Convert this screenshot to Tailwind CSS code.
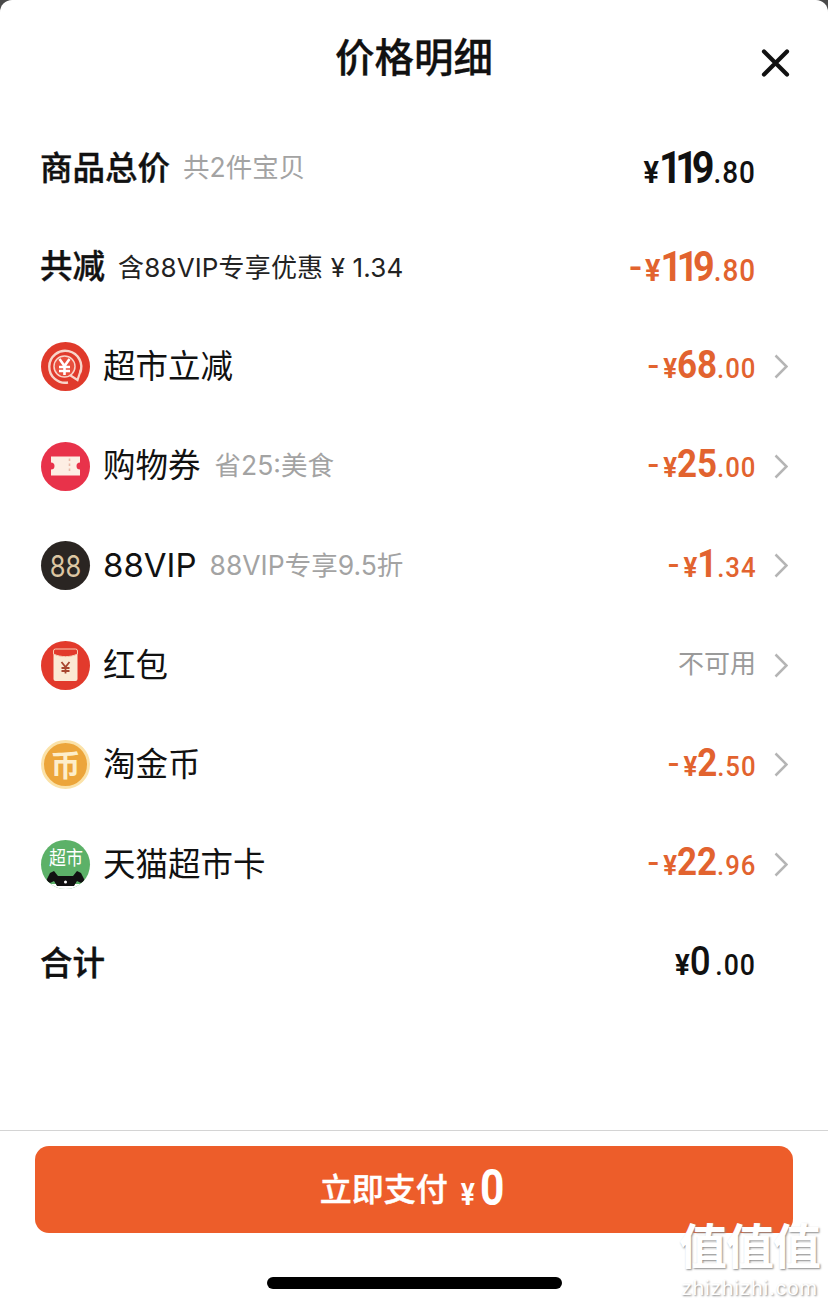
<!DOCTYPE html>
<html lang="zh">
  <head>
    <meta charset="UTF-8" />
    <title>价格明细</title>
    <script src="https://cdn.jsdelivr.net/npm/@tailwindcss/browser@4"></script>
  </head>
  <body class="bg-[#4a4a4a] font-['Inter','Noto_Sans_CJK_SC',sans-serif]">
    <div class="relative w-[828px] h-[1305px] overflow-hidden bg-white rounded-t-[12px] flex flex-col text-[#111]">
      <header class="relative h-[118px] flex items-center justify-center shrink-0">
        <h1 class="text-[39.500px] leading-none font-medium [-webkit-text-stroke:0.3px_#111]">价格明细</h1>
        <svg class="absolute left-[761px] top-[49px]" width="29" height="28" viewBox="0 0 29 28" fill="none" stroke="#111" stroke-width="4.200" stroke-linecap="round"><path d="M3 2.500 26 25.500M26 2.500 3 25.500"/></svg>
      </header>

      <ul class="flex flex-col pl-[41px] pr-[40px] shrink-0">
        <li class="h-[99.500px] flex items-center">
          <span class="-ml-[1px] mt-[3px] text-[32.500px] font-medium [-webkit-text-stroke:0.4px_#111]">商品总价</span>
          <span class="ml-[13px] mt-[1px] text-[26.500px] text-[#a3a3a3]">共2件宝贝</span>
          <span class="ml-auto mr-[32px] mt-[1px] inline-block origin-right scale-x-[.9] font-['Roboto',sans-serif] font-bold whitespace-nowrap"><span class="text-[32px]">¥</span><span class="text-[44px] tracking-[-7px]">119</span><span class="ml-[6px] text-[31px] font-medium tracking-[1px]">.80</span></span>
        </li>
        <li class="h-[99.500px] flex items-center">
          <span class="-ml-[1px] mt-[1px] text-[32.500px] font-medium [-webkit-text-stroke:0.4px_#111]">共减</span>
          <span class="ml-[13px] text-[26px] tracking-[.15px] text-[#222]">含88VIP专享优惠 ¥ 1.34</span>
          <span class="ml-auto mr-[32px] mb-[1px] inline-block origin-right scale-x-[.9] font-['Roboto',sans-serif] font-bold whitespace-nowrap text-[#e2632f]"><span class="inline-block scale-x-[1.250] -translate-y-[3px] mr-[4px] text-[32px]">-</span><span class="text-[32px]">¥</span><span class="text-[42px] tracking-[-6px]">119</span><span class="ml-[5px] text-[31px] font-medium tracking-[1px]">.80</span></span>
        </li>

        <li class="h-[99.500px] flex items-center">
          <svg class="w-[49px] h-[49px] mr-[13px] shrink-0" viewBox="0 0 49 49">
            <circle cx="24.500" cy="24.500" r="24.500" fill="#e03a2b"/>
            <path d="M27 40.500A16 16 0 1 1 39 31" stroke="#f8d5ca" stroke-width="2.400" fill="none"/>
            <path d="M40 27.500 36.500 38 29.500 33.500" stroke="#f8d5ca" stroke-width="2.200" fill="none"/>
            <circle cx="23.500" cy="24.500" r="10.500" fill="#e8503e" stroke="#f8d5ca" stroke-width="1.500"/>
            <path d="M18.500 17l5 7 5-7M23.500 24v9M18 25h11M18 29h11" stroke="#fff" stroke-width="2.600" fill="none"/>
          </svg>
          <span class="mt-[2px] text-[32.500px]">超市立减</span>
          <span class="ml-auto mb-[3px] inline-block origin-right scale-x-[.92] font-['Roboto',sans-serif] font-bold whitespace-nowrap text-[#e2632f]"><span class="inline-block scale-x-[1.250] -translate-y-[3px] mr-[5px] text-[28px]">-</span><span class="text-[28px]">¥</span><span class="text-[38px]">68</span><span class="text-[28px] font-medium tracking-[1px]">.00</span></span>
          <svg class="ml-[18px] shrink-0" width="14" height="25" viewBox="0 0 14 25" fill="none" stroke="#b5b5b5" stroke-width="2.500"><path d="M1.500 1.500l11 11-11 11"/></svg>
        </li>
        <li class="h-[99.500px] flex items-center">
          <svg class="w-[49px] h-[49px] mr-[13px] shrink-0" viewBox="0 0 49 49">
            <circle cx="24.500" cy="24.500" r="24.500" fill="#e8324a"/>
            <path d="M10 14.500h29v6a3.500 3.500 0 0 0 0 7v6H10v-6a3.500 3.500 0 0 0 0-7z" fill="#fdeee4"/>
            <path d="M28.500 16.500v15" stroke="#e8b9a8" stroke-width="1.600" stroke-dasharray="2.500 2.500"/>
          </svg>
          <span class="mt-[1px] text-[32.500px]">购物券</span>
          <span class="ml-[14px] text-[26.500px] text-[#a3a3a3]">省25:美食</span>
          <span class="ml-auto mb-[3px] inline-block origin-right scale-x-[.92] font-['Roboto',sans-serif] font-bold whitespace-nowrap text-[#e2632f]"><span class="inline-block scale-x-[1.250] -translate-y-[3px] mr-[5px] text-[28px]">-</span><span class="text-[28px]">¥</span><span class="text-[38px]">25</span><span class="text-[28px] font-medium tracking-[1px]">.00</span></span>
          <svg class="ml-[18px] shrink-0" width="14" height="25" viewBox="0 0 14 25" fill="none" stroke="#b5b5b5" stroke-width="2.500"><path d="M1.500 1.500l11 11-11 11"/></svg>
        </li>
        <li class="h-[99.500px] flex items-center">
          <span class="w-[49px] h-[49px] mr-[13px] shrink-0 rounded-full bg-[#2a2522] flex items-center justify-center text-[#dcc6a2] text-[30px] leading-none"><span class="inline-block scale-x-[.85]">88</span></span>
          <span class="text-[33px]">88VIP</span>
          <span class="ml-[13px] text-[26.500px] text-[#a3a3a3]">88VIP专享9.5折</span>
          <span class="ml-auto mb-[3px] inline-block origin-right scale-x-[.92] font-['Roboto',sans-serif] font-bold whitespace-nowrap text-[#e2632f]"><span class="inline-block scale-x-[1.250] -translate-y-[3px] mr-[5px] text-[28px]">-</span><span class="text-[28px]">¥</span><span class="text-[38px] tracking-[-3px]">1</span><span class="ml-[3px] text-[28px] font-medium tracking-[1px]">.34</span></span>
          <svg class="ml-[18px] shrink-0" width="14" height="25" viewBox="0 0 14 25" fill="none" stroke="#b5b5b5" stroke-width="2.500"><path d="M1.500 1.500l11 11-11 11"/></svg>
        </li>
        <li class="h-[99.500px] flex items-center">
          <svg class="w-[49px] h-[49px] mr-[13px] shrink-0" viewBox="0 0 49 49">
            <circle cx="24.500" cy="24.500" r="24.500" fill="#e23a2c"/>
            <rect x="12.500" y="8" width="24" height="32" rx="2" fill="#fbe9d3"/>
            <path d="M12.500 10a2 2 0 0 1 2-2h20a2 2 0 0 1 2 2v3c-7 3.500-17 3.500-24 0z" fill="#e23a2c" stroke="#f7cdb4" stroke-width="1"/>
            <path d="M20.500 21l4 5 4-5M24.500 26v6.500M20.500 27h8M20.500 30h8" stroke="#a8452f" stroke-width="1.800" fill="none"/>
          </svg>
          <span class="mt-[2px] text-[32.500px]">红包</span>
          <span class="ml-auto mb-[3px] text-[26px] text-[#9a9a9a]">不可用</span>
          <svg class="ml-[18px] shrink-0" width="14" height="25" viewBox="0 0 14 25" fill="none" stroke="#b5b5b5" stroke-width="2.500"><path d="M1.500 1.500l11 11-11 11"/></svg>
        </li>
        <li class="h-[99.500px] flex items-center">
          <span class="w-[49px] h-[49px] mr-[13px] shrink-0 rounded-full bg-[#eca53a] border-[3px] border-[#fbe2a8] flex items-center justify-center text-[#fdeecb] text-[30px] leading-none font-bold">币</span>
          <span class="mt-[2px] text-[32.500px]">淘金币</span>
          <span class="ml-auto mb-[3px] inline-block origin-right scale-x-[.92] font-['Roboto',sans-serif] font-bold whitespace-nowrap text-[#e2632f]"><span class="inline-block scale-x-[1.250] -translate-y-[3px] mr-[5px] text-[28px]">-</span><span class="text-[28px]">¥</span><span class="text-[38px]">2</span><span class="text-[28px] font-medium tracking-[1px]">.50</span></span>
          <svg class="ml-[18px] shrink-0" width="14" height="25" viewBox="0 0 14 25" fill="none" stroke="#b5b5b5" stroke-width="2.500"><path d="M1.500 1.500l11 11-11 11"/></svg>
        </li>
        <li class="h-[99.500px] flex items-center">
          <span class="relative w-[49px] h-[49px] mr-[13px] shrink-0 rounded-full overflow-hidden bg-[#5cb168] text-white text-[17px] leading-none">
            <span class="absolute left-[8px] top-[10px] whitespace-nowrap scale-y-[1.150]">超市</span>
            <svg class="absolute left-0 top-0" width="49" height="49" viewBox="0 0 49 49">
              <path d="M0 44h49v5H0z" fill="#fff"/>
              <path d="M5 41l4-8 4-2 4 5h15l4-5 4 2 4 8-4 2-4-2-3 5H16l-3-5-4 2z" fill="#111"/>
              <circle cx="24.500" cy="42" r="1.500" fill="#fff"/>
            </svg>
          </span>
          <span class="mt-[2px] text-[32.500px]">天猫超市卡</span>
          <span class="ml-auto mb-[3px] inline-block origin-right scale-x-[.92] font-['Roboto',sans-serif] font-bold whitespace-nowrap text-[#e2632f]"><span class="inline-block scale-x-[1.250] -translate-y-[3px] mr-[5px] text-[28px]">-</span><span class="text-[28px]">¥</span><span class="text-[38px]">22</span><span class="text-[28px] font-medium tracking-[1px]">.96</span></span>
          <svg class="ml-[18px] shrink-0" width="14" height="25" viewBox="0 0 14 25" fill="none" stroke="#b5b5b5" stroke-width="2.500"><path d="M1.500 1.500l11 11-11 11"/></svg>
        </li>
        <li class="h-[99.500px] flex items-center">
          <span class="-ml-[1px] mt-[2px] text-[32.500px] font-medium [-webkit-text-stroke:0.4px_#111]">合计</span>
          <span class="ml-auto mr-[32px] mb-[3px] inline-block origin-right scale-x-[.92] font-['Roboto',sans-serif] font-bold whitespace-nowrap"><span class="text-[30px]">¥</span><span class="text-[40px] font-medium">0</span><span class="ml-[5px] text-[29px] font-medium tracking-[1px]">.00</span></span>
        </li>
      </ul>

      <div class="mt-auto border-t border-[#d4d4d4] h-[175px] pt-[15px] px-[35px] flex flex-col items-center shrink-0">
        <button class="w-[758px] h-[87px] rounded-[14px] bg-[#ed5d2a] text-white flex items-center justify-center font-medium">
          <span class="text-[32px] [-webkit-text-stroke:0.4px_#fff]">立即支付</span>
          <span class="ml-[9px] mb-[2px] inline-block scale-x-[.85] font-['Roboto',sans-serif] font-bold whitespace-nowrap"><span class="text-[31px]">¥</span><span class="ml-[6px] text-[50px]">0</span></span>
        </button>
        <div class="mt-[44px] w-[295px] h-[12px] rounded-full bg-black"></div>
      </div>

      <div class="absolute left-[677px] top-[1224px] w-[145px] flex flex-col items-center text-white [text-shadow:1px_1px_2px_#8a8a8a]">
        <span class="text-[48px] leading-[46px] tracking-[-1px] font-bold whitespace-nowrap">值值值</span>
        <span class="mt-[6px] text-[21px] leading-[24px] font-['Liberation_Sans',sans-serif] tracking-[.8px] whitespace-nowrap">zhizhizhi.com</span>
      </div>
    </div>
  </body>
</html>
